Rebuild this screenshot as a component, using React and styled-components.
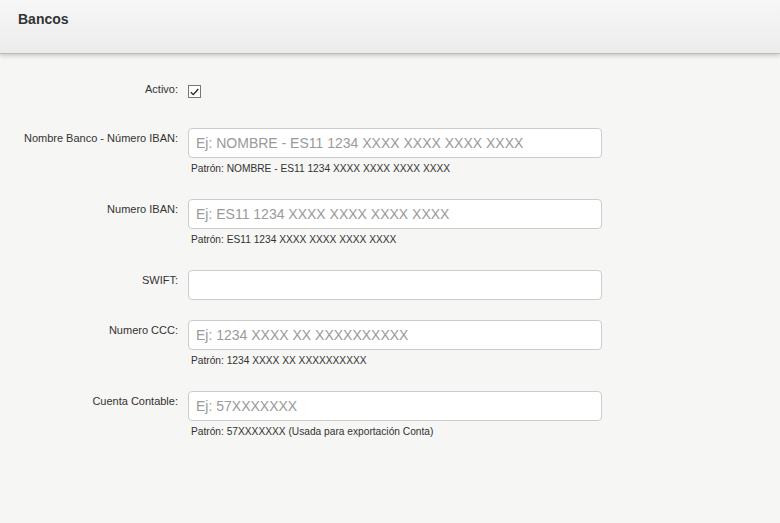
import React from 'react';
import styled, { createGlobalStyle } from 'styled-components';

const GlobalStyle = createGlobalStyle`
  html, body {
    margin: 0;
    padding: 0;
    background: #f6f6f4;
    font-family: "Liberation Sans", Arial, sans-serif;
    color: #333;
  }
  #root {
    min-height: 523px;
  }
`;

const Header = styled.header`
  height: 54px;
  background: linear-gradient(to bottom, #f7f7f7 0%, #ececec 100%);
  border-bottom: 1px solid #bdbdbd;
  box-shadow: 0 2px 4px rgba(0, 0, 0, 0.18);
  padding: 11px 18px 0;
  box-sizing: border-box;
`;

const Title = styled.h1`
  margin: 0;
  font-size: 14px;
  line-height: 17px;
  font-weight: bold;
  color: #333;
`;

const Form = styled.form`
  padding-top: 26px;
`;

const Row = styled.div`
  display: grid;
  grid-template-columns: 178px 414px;
  column-gap: 10px;
  margin-bottom: ${({ spacing }) => spacing || 20}px;
`;

const Label = styled.label`
  text-align: right;
  font-size: 11px;
  line-height: 13px;
  padding-top: ${({ top }) => top}px;
  color: #333;
`;

const Field = styled.div`
  display: flex;
  flex-direction: column;
`;

const Input = styled.input`
  box-sizing: border-box;
  width: 414px;
  height: 30px;
  border: 1px solid #cccccc;
  border-radius: 4px;
  background: #fff;
  padding: 0 7px;
  font-family: "Liberation Sans", Arial, sans-serif;
  font-size: 14px;
  color: #333;
  outline: none;

  &::placeholder {
    color: #9a9a9a;
  }
`;

const Help = styled.span`
  display: block;
  margin: 5px 0 4px 3px;
  font-size: 10.2px;
  line-height: 12px;
  color: #333;
`;

const CheckBox = styled.span`
  display: inline-flex;
  align-items: center;
  justify-content: center;
  width: 13px;
  height: 13px;
  box-sizing: border-box;
  margin-top: 5px;
  border: 1px solid #777;
  background: #fff;
`;

const fields = [
  {
    label: 'Nombre Banco - Número IBAN:',
    placeholder: 'Ej: NOMBRE - ES11 1234 XXXX XXXX XXXX XXXX',
    help: 'Patrón: NOMBRE - ES11 1234 XXXX XXXX XXXX XXXX',
  },
  {
    label: 'Numero IBAN:',
    placeholder: 'Ej: ES11 1234 XXXX XXXX XXXX XXXX',
    help: 'Patrón: ES11 1234 XXXX XXXX XXXX XXXX',
  },
  { label: 'SWIFT:', placeholder: '' },
  {
    label: 'Numero CCC:',
    placeholder: 'Ej: 1234 XXXX XX XXXXXXXXXX',
    help: 'Patrón: 1234 XXXX XX XXXXXXXXXX',
  },
  {
    label: 'Cuenta Contable:',
    placeholder: 'Ej: 57XXXXXXX',
    help: 'Patrón: 57XXXXXXX (Usada para exportación Conta)',
  },
];

export default function App() {
  return (
    <>
      <GlobalStyle />
      <Header>
        <Title>Bancos</Title>
      </Header>
      <Form onSubmit={(e) => e.preventDefault()}>
        <Row spacing={28}>
          <Label top={3}>Activo:</Label>
          <div>
            <CheckBox>
              <svg width="9" height="8" viewBox="0 0 9 8">
                <path d="M0.8 4.2 L3.3 6.6 L8.3 1" fill="none" stroke="#222" strokeWidth="1.3" />
              </svg>
            </CheckBox>
          </div>
        </Row>
        {fields.map((f) => (
          <Row key={f.label}>
            <Label top={4}>{f.label}</Label>
            <Field>
              <Input type="text" placeholder={f.placeholder} />
              {f.help && <Help>{f.help}</Help>}
            </Field>
          </Row>
        ))}
      </Form>
    </>
  );
}
